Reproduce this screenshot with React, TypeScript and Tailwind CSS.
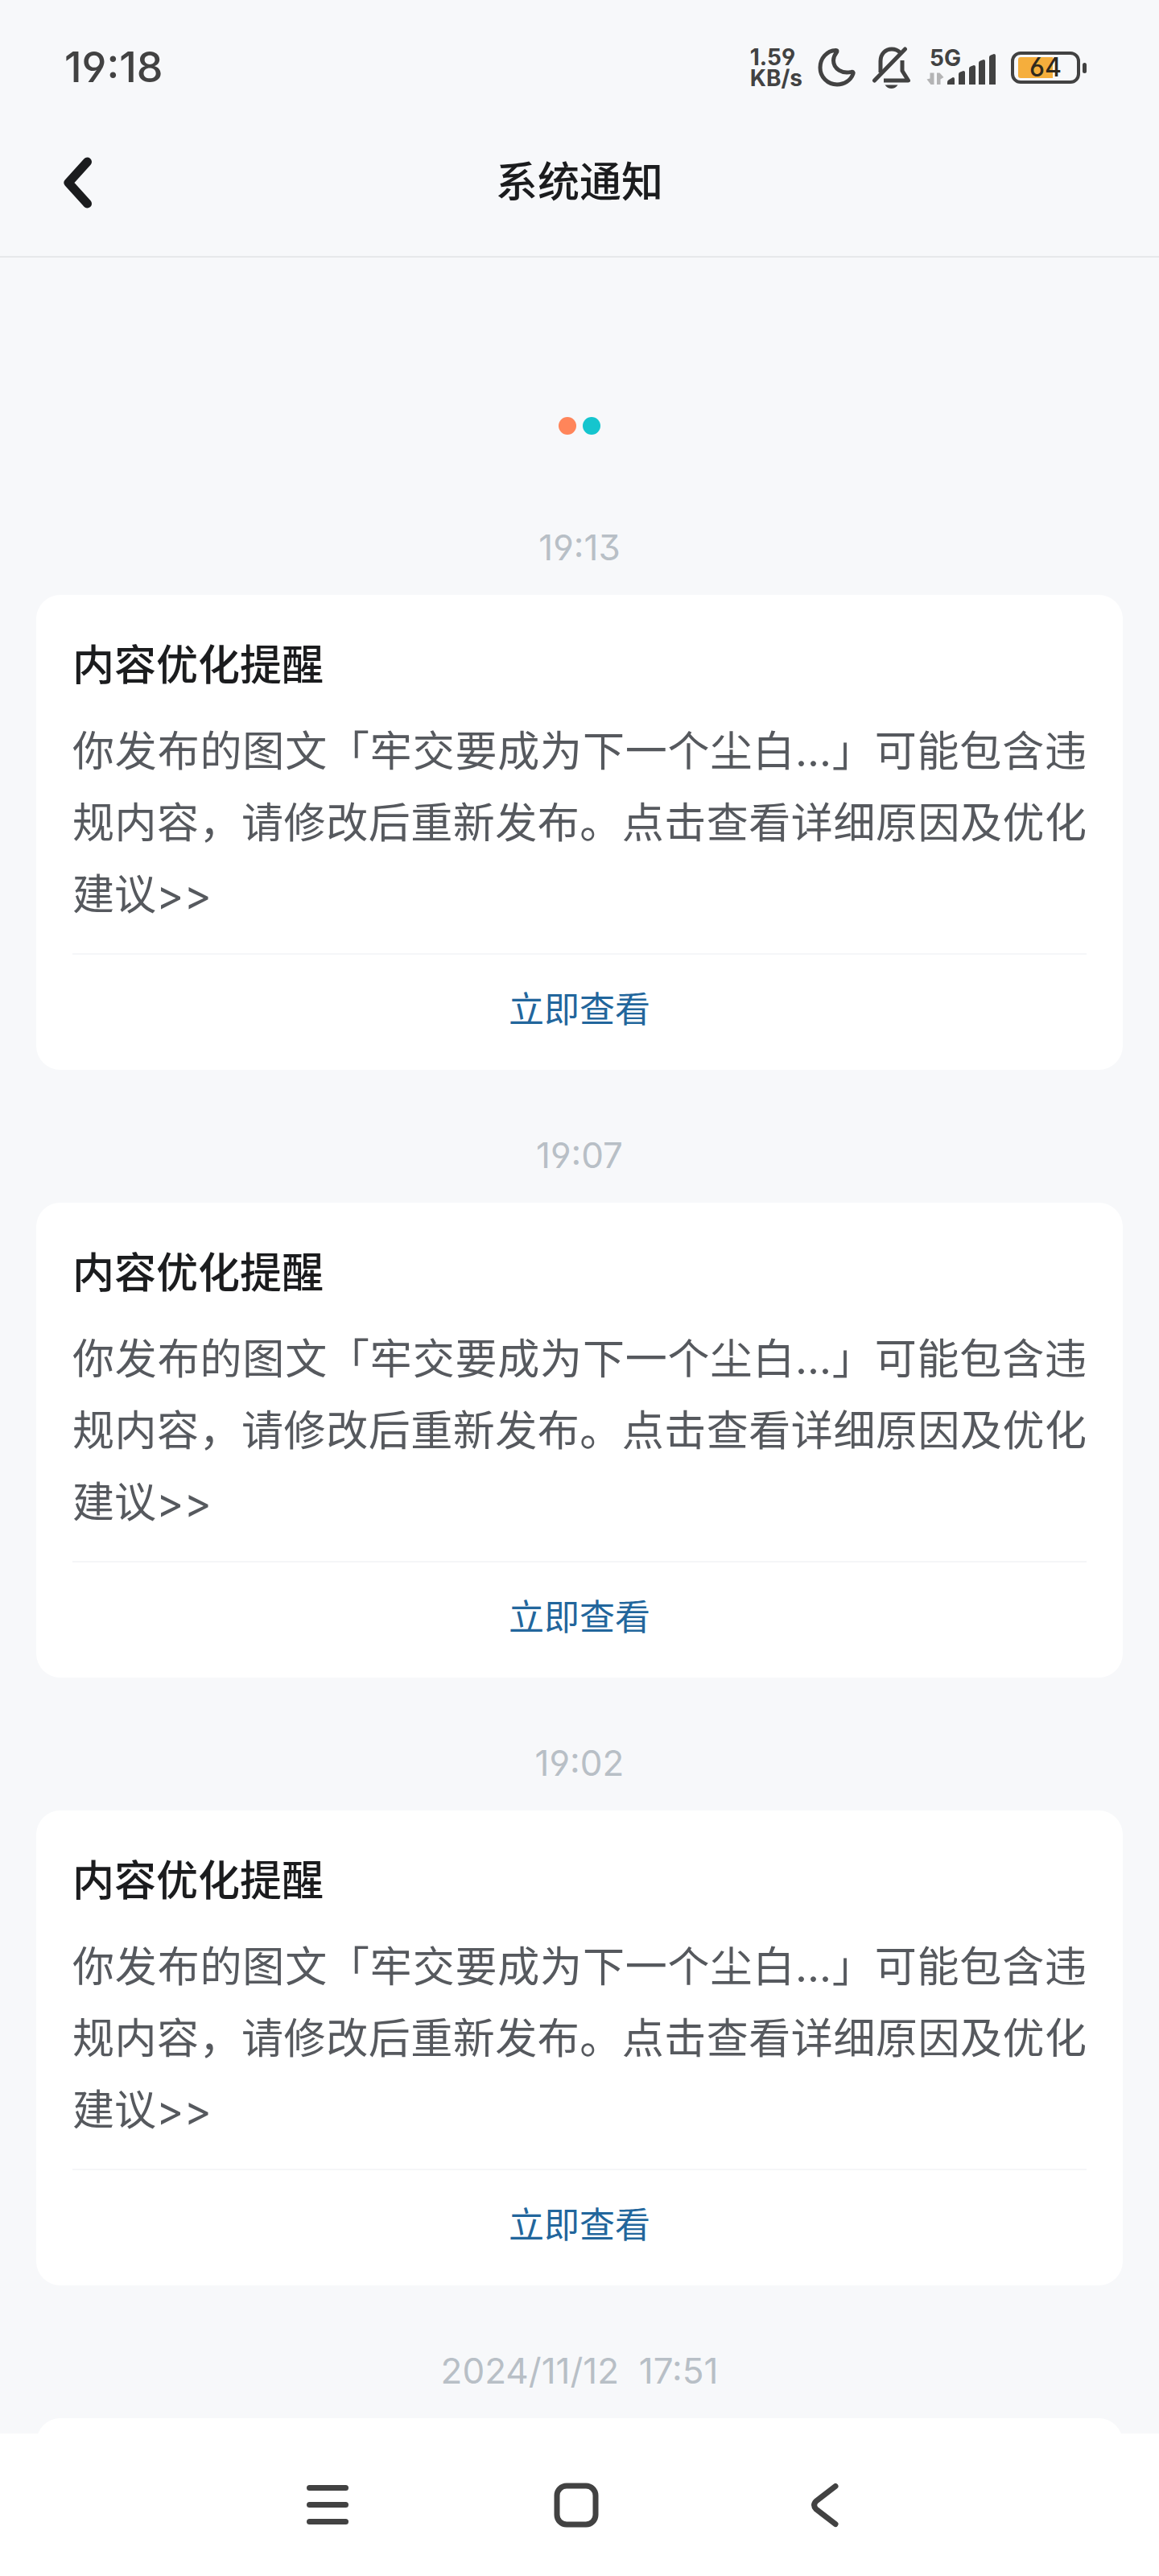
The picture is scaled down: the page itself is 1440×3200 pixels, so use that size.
import React from 'react';

interface Notice {
  time: string;
  title?: string;
  content?: string;
  action?: string;
}

const optimizeNotice = {
  title: '内容优化提醒',
  content:
    '你发布的图文「牢交要成为下一个尘白...」可能包含违规内容，请修改后重新发布。点击查看详细原因及优化建议>>',
  action: '立即查看',
};

const notices: Notice[] = [
  { time: '19:13', ...optimizeNotice },
  { time: '19:07', ...optimizeNotice },
  { time: '19:02', ...optimizeNotice },
  // body not loaded yet
  { time: '2024/11/12\u00a0 17:51' },
];

function MoonIcon() {
  return (
    <svg width="48" height="50" viewBox="0 0 48 50" fill="none">
      <path
        d="M22.500 3.500C11 4 3 13.500 3 25s9 21 21 21c9 0 17-5 20-13.500.6-1.800-.5-2.700-2.300-2.200C31 33 19.500 27 19.500 16c0-3.500 1.300-6.500 3.700-9.500 1.300-1.700 1-3-.7-3Z"
        stroke="#424242"
        strokeWidth="5"
        strokeLinejoin="round"
      />
    </svg>
  );
}

function BellOffIcon() {
  return (
    <svg width="49" height="54" viewBox="0 0 49 54" fill="none">
      <g stroke="#424242" strokeWidth="5" strokeLinejoin="round">
        <path d="M11 33V19C11 10 17 4 25 4c4 0 7.500 1.500 10 4" />
        <path d="M38 18V31l7.500 12H15" />
        <path d="M3.500 43 41.500 4" strokeLinecap="round" />
      </g>
      <path d="M16.500 48.500h16c-2 3-5 4.500-8 4.500s-6-1.500-8-4.500Z" fill="#424242" />
    </svg>
  );
}

function Signal() {
  return (
    <div className="relative">
      <span className="absolute left-1 -top-1 text-[28px] leading-7 font-bold">5G</span>
      <svg width="86" height="44" viewBox="0 0 86 44">
        <path
          d="M4.500 28.500h5V43h-4L0.500 36.500l4-1ZM13 28.500h3.500l5 5.500-4 2.500V43H13Z"
          fill="#b4b4b5"
        />
        <g fill="#424242">
          <path d="M26 40q0-2 2-3l5-3q2 0 2 2v7h-9Z" />
          <path d="M40 30q0-2 2-2.500l4-1.500q2 0 2 2v15h-8Z" />
          <path d="M53 23q0-2 2-2.500l4-1.500q2 0 2 2v22h-8Z" />
          <path d="M65 16q0-2 2-2.500l4-1.500q2 0 2 2v29h-8Z" />
          <path d="M78 9q0-2 2-2.500l4-1.500q2 0 2 2v36h-8Z" />
        </g>
      </svg>
    </div>
  );
}

function Battery({ level }: { level: number }) {
  return (
    <div className="relative">
      <svg width="94" height="40" viewBox="0 0 94 40">
        <rect x="2" y="2" width="82" height="36" rx="10" fill="none" stroke="#424242" strokeWidth="4" />
        <path d="M12 7h40v26H12a3 3 0 0 1-3-3V10a3 3 0 0 1 3-3Z" fill="#f5ae3c" />
        <rect x="89" y="14" width="5" height="13" rx="2.500" fill="#424242" />
      </svg>
      <span className="absolute inset-y-0 left-0 w-[86px] text-center text-[32px] leading-10 font-medium text-[#30291d]">
        {level}
      </span>
    </div>
  );
}

function StatusBar() {
  return (
    <div className="flex h-[132px] shrink-0 items-center justify-between pt-9 pr-[90px] pl-20 text-[#424242]">
      <span className="text-[52px] font-medium">19:18</span>
      <div className="flex items-center gap-[19px]">
        <div className="flex flex-col text-[28px] leading-[26px] font-bold">
          <span>1.59</span>
          <span>KB/s</span>
        </div>
        <MoonIcon />
        <BellOffIcon />
        <Signal />
        <Battery level={64} />
      </div>
    </div>
  );
}

function Header() {
  return (
    <header className="relative flex h-[188px] shrink-0 items-center justify-center border-b-2 border-[#e6e8ea] pt-1">
      <button className="absolute left-[76px]" aria-label="返回">
        <svg width="42" height="66" viewBox="0 0 42 66" fill="none">
          <path
            d="M32.500 7 9 33l23.500 26"
            stroke="#1b1c1e"
            strokeWidth="11"
            strokeLinecap="round"
            strokeLinejoin="round"
          />
        </svg>
      </button>
      <h1 className="text-[52px] font-medium text-[#1b1c1e]">系统通知</h1>
    </header>
  );
}

function NoticeCard({ notice }: { notice: Notice }) {
  if (!notice.content) {
    return <article className="h-[590px] rounded-[30px] bg-white" />;
  }

  return (
    <article className="rounded-[30px] bg-white px-[45px] pt-12">
      <h2 className="text-[52px] leading-20 font-medium text-[#1b1c1e]">{notice.title}</h2>
      <p className="mt-[22px] text-justify text-[52px] leading-[89px] text-[#56595e]">{notice.content}</p>
      <div className="mt-7 flex h-[145px] items-center justify-center border-t-2 border-[#f5f6f8] pb-2">
        <a href="#detail" className="text-[44px] text-[#22669c]">
          {notice.action}
        </a>
      </div>
    </article>
  );
}

function NavBar() {
  return (
    <nav className="grid h-[177px] shrink-0 grid-cols-3 place-items-center bg-white pr-[261px] pl-[253px]">
      <button aria-label="最近任务">
        <svg width="52" height="50" viewBox="0 0 52 50" fill="#424242">
          <rect width="52" height="7" rx="3.500" />
          <rect y="21" width="52" height="7" rx="3.500" />
          <rect y="42" width="52" height="7" rx="3.500" />
        </svg>
      </button>
      <button aria-label="主屏幕">
        <svg width="56" height="56" viewBox="0 0 56 56" fill="none">
          <rect x="4" y="4" width="48" height="48" rx="12" stroke="#424242" strokeWidth="7" />
        </svg>
      </button>
      <button aria-label="返回上一级">
        <svg width="36" height="56" viewBox="0 0 36 56" fill="none">
          <path
            d="M31 4.500 7 23q-5 5 0 10L31 51.500"
            stroke="#424242"
            strokeWidth="7"
            strokeLinecap="round"
            strokeLinejoin="round"
          />
        </svg>
      </button>
    </nav>
  );
}

export default function App() {
  return (
    <div
      lang="zh-CN"
      className="flex h-screen flex-col overflow-hidden bg-[#f7f8fa] font-['Inter','Noto_Sans_CJK_SC',sans-serif] [font-feature-settings:'cv03','cv04','cv09']"
    >
      <StatusBar />
      <Header />
      <main className="min-h-0 flex-1 overflow-hidden px-[45px]">
        <div className="mt-[198px] flex justify-center gap-2">
          <span className="size-[22px] rounded-full bg-[#ff855a]" />
          <span className="size-[22px] rounded-full bg-[#15c5ce]" />
        </div>
        <div className="mt-[34px]">
          {notices.map((notice) => (
            <section key={notice.time}>
              <time className="block pt-[74px] pb-[27px] text-center text-[44px] leading-16 text-[#b8bfc6]">
                {notice.time}
              </time>
              <NoticeCard notice={notice} />
            </section>
          ))}
        </div>
      </main>
      <NavBar />
    </div>
  );
}
